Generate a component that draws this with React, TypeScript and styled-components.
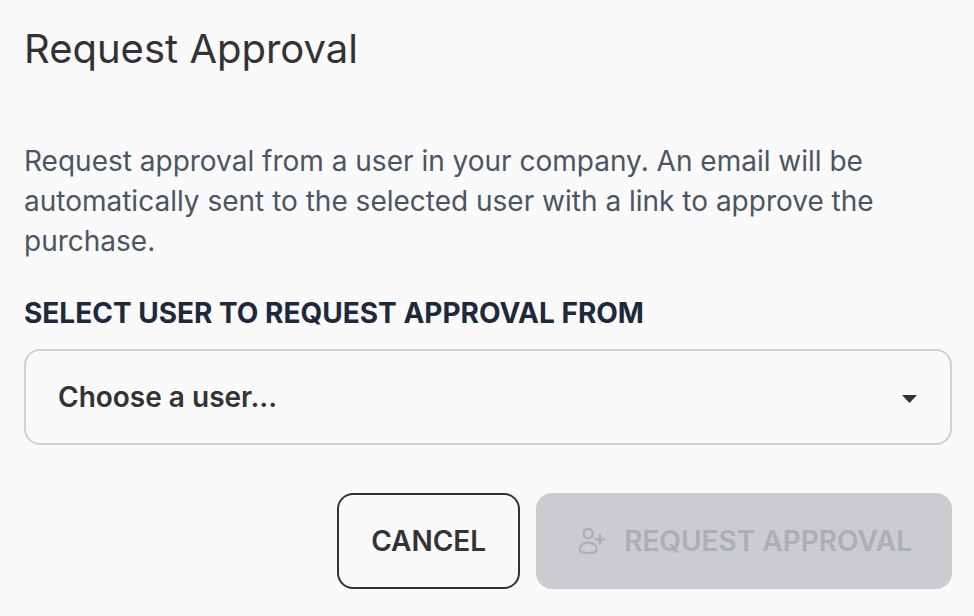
import React, { useState } from "react";
import styled, { createGlobalStyle } from "styled-components";

const GlobalStyle = createGlobalStyle`
  *, *::before, *::after { box-sizing: border-box; }
  body {
    margin: 0;
    background: #fafafa;
    color: #333333;
    font-family: Inter, "Liberation Sans", sans-serif;
  }
`;

const Page = styled.main`
  padding: 24px 22px 24px 24px;
`;

const Title = styled.h1`
  margin: 0 0 67px;
  font-size: 40px;
  font-weight: 400;
  line-height: 50px;
`;

const Description = styled.p`
  margin: 0 0 32px;
  color: #4b5563;
  font-size: 28px;
  line-height: 40px;
`;

const Form = styled.form`
  display: flex;
  flex-direction: column;
`;

const Label = styled.label`
  margin-bottom: 16px;
  color: #1e293b;
  font-size: 28px;
  font-weight: 700;
  line-height: 40px;
  text-transform: uppercase;
`;

const SelectFrame = styled.div`
  display: grid;
  align-items: center;
  margin-bottom: 48px;

  & > * { grid-area: 1 / 1; }
`;

const Select = styled.select`
  appearance: none;
  width: 100%;
  height: 96px;
  padding: 0 72px 0 32px;
  border: 2px solid #d1d1d1;
  border-radius: 16px;
  background: transparent;
  color: #333333;
  font: 600 28px/40px Inter, "Liberation Sans", sans-serif;
`;

const Caret = styled.svg`
  justify-self: end;
  margin-right: 34px;
  pointer-events: none;
`;

const Actions = styled.div`
  display: flex;
  flex-wrap: wrap;
  justify-content: flex-end;
  gap: 16px;
`;

const Button = styled.button<{ $filled?: boolean }>`
  display: inline-flex;
  align-items: center;
  gap: 16px;
  height: 96px;
  padding: 0 ${(p) => (p.$filled ? 38 : 32)}px;
  border: 2px solid ${(p) => (p.$filled ? "#cbccd0" : "#333333")};
  border-radius: 16px;
  background: ${(p) => (p.$filled ? "#cbccd0" : "transparent")};
  color: ${(p) => (p.$filled ? "#acaeb1" : "#333333")};
  font: 600 28px/40px Inter, "Liberation Sans", sans-serif;
  text-transform: uppercase;
`;

function UserPlusIcon() {
  return (
    <svg width="32" height="32" viewBox="0 0 32 32" fill="none" stroke="currentColor" strokeWidth="2.2" strokeLinecap="round" strokeLinejoin="round" aria-hidden="true">
      <circle cx="12.3" cy="8.6" r="4.7" />
      <path d="M12.3 17.4C7.3 17.4 3.8 21 3.8 24.8C3.800 27.200 6.300 28 12.300 28S20.800 27.200 20.800 24.800C20.800 21 17.300 17.400 12.300 17.400Z" />
      <path d="M24 9.800v9M19.600 14.300h8.800" />
    </svg>
  );
}

export default function App() {
  const [user, setUser] = useState("");
  return (
    <>
      <GlobalStyle />
      <Page>
        <Title>Request Approval</Title>
        <Description>
          Request approval from a user in your company. An email will be automatically sent to the
          selected user with a link to approve the purchase.
        </Description>
        <Form onSubmit={(e) => e.preventDefault()}>
          <Label htmlFor="approver">Select user to request approval from</Label>
          <SelectFrame>
            <Select id="approver" value={user} onChange={(e) => setUser(e.target.value)}>
              <option value="">Choose a user...</option>
            </Select>
            <Caret width="16" height="12" viewBox="0 0 16 12" fill="#333333" aria-hidden="true">
              <path d="M0 4h15L7.500 12z" />
            </Caret>
          </SelectFrame>
          <Actions>
            <Button type="button">Cancel</Button>
            <Button type="submit" $filled disabled={!user}>
              <UserPlusIcon />
              Request Approval
            </Button>
          </Actions>
        </Form>
      </Page>
    </>
  );
}
